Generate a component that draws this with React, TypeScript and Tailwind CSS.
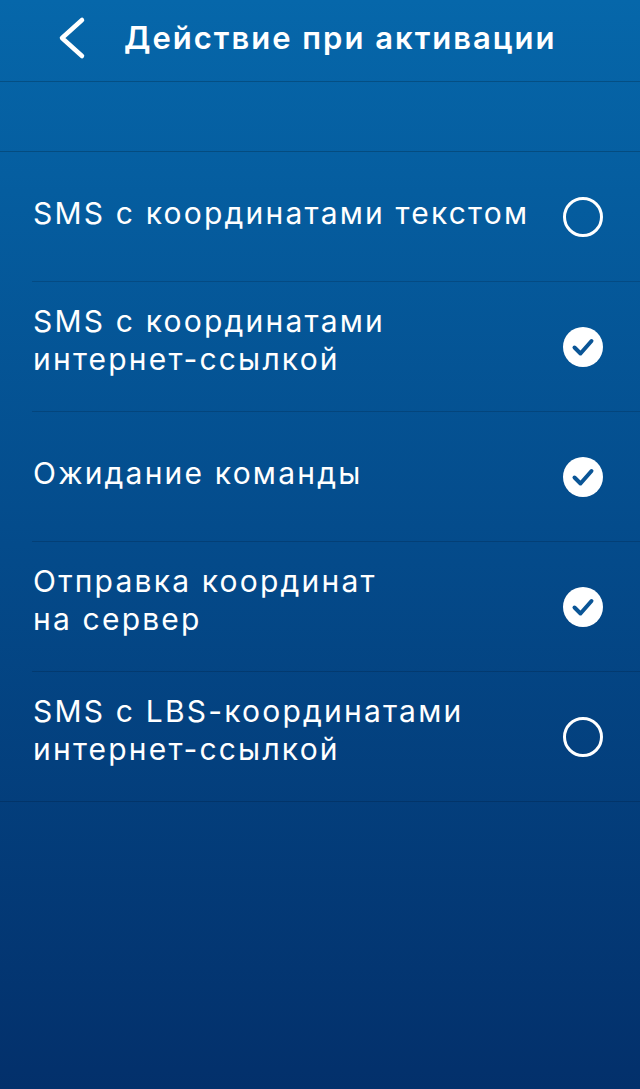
import React from "react";

const items = [
  { lines: ["SMS с координатами текстом"], checked: false },
  { lines: ["SMS с координатами", "интернет-ссылкой"], checked: true },
  { lines: ["Ожидание команды"], checked: true },
  { lines: ["Отправка координат", "на сервер"], checked: true },
  { lines: ["SMS с LBS-координатами", "интернет-ссылкой"], checked: false },
];

function Radio({ checked }: { checked: boolean }) {
  if (checked) {
    return (
      <svg width="42" height="42" viewBox="0 0 42 42">
        <circle cx="21" cy="21" r="20" fill="#ffffff" />
        <path d="M12.5 21.5 L18.5 27.5 L29.5 15" fill="none" stroke="#0a5596" strokeWidth="4" strokeLinecap="round" strokeLinejoin="round" />
      </svg>
    );
  }
  return (
    <svg width="42" height="42" viewBox="0 0 42 42">
      <circle cx="21" cy="21" r="18.5" fill="none" stroke="#ffffff" strokeWidth="3" />
    </svg>
  );
}

export default function App() {
  return (
    <div
      className="w-[640px] h-[1089px] bg-gradient-to-b from-[#0667aa] via-[#044b8b] to-[#03306b] text-white flex flex-col"
      style={{ fontFamily: "Inter, Roboto, 'Noto Sans', sans-serif" }}
    >
      <div className="h-[82px] border-b border-black/20 flex items-center pb-[6px]">
        <div className="w-[124px] flex items-center pl-[54px]">
          <svg width="34" height="44" viewBox="0 0 34 44">
            <path d="M28 4 L8 22 L28 40" fill="none" stroke="#ffffff" strokeWidth="4.5" strokeLinecap="round" strokeLinejoin="round" />
          </svg>
        </div>
        <div className="text-[31px] font-semibold tracking-[2px] leading-none">Действие при активации</div>
      </div>
      <div className="h-[70px] border-b border-black/20" />
      {items.map((it, i) => (
        <div
          key={i}
          className={
            "h-[130px] flex items-center " +
            (i === items.length - 1 ? "border-b border-black/15" : "")
          }
        >
          <div
            className={
              "ml-[32px] flex-1 h-full flex items-center justify-between pl-[1px] pr-[36px] " +
              (i < items.length - 1 ? "border-b border-black/15" : "")
            }
          >
            <div
              className={
                "text-[30px] leading-[38px] tracking-[2.2px] " +
                (it.lines.length > 1 ? "pb-[14px]" : "pb-[7px]")
              }
            >
              {it.lines.map((l, j) => (
                <div key={j}>{l}</div>
              ))}
            </div>
            <Radio checked={it.checked} />
          </div>
        </div>
      ))}
    </div>
  );
}
